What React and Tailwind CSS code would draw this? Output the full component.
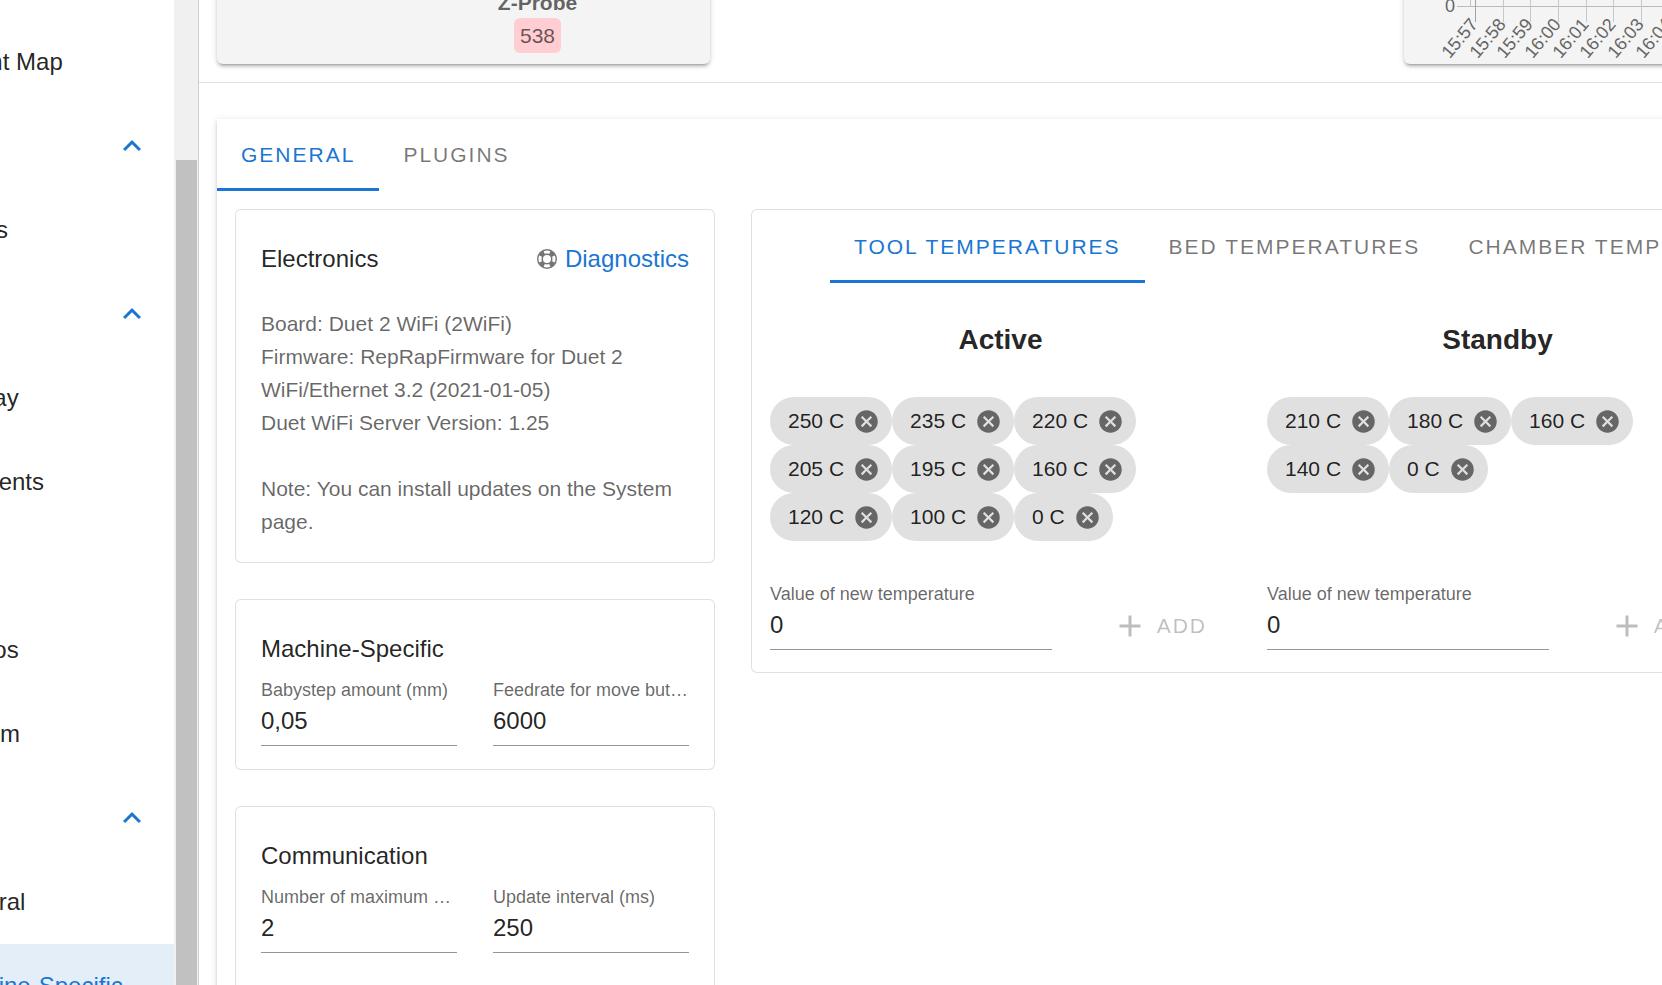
import React, { useState, useId } from 'react';

const navItems = [
  { title: 'Height Map' },
  { title: 'Current Job', group: true },
  { title: 'Status' },
  { title: 'File Management', group: true },
  { title: 'Display' },
  { title: 'Filaments' },
  { title: 'Jobs' },
  { title: 'Macros' },
  { title: 'System' },
  { title: 'Settings', group: true },
  { title: 'General' },
  { title: 'Machine-Specific', active: true },
];

const timeLabels = ['15:57', '15:58', '15:59', '16:00', '16:01', '16:02', '16:03', '16:04', '16:05', '16:06'];

const ChevronUpIcon = () => (
  <svg viewBox="0 0 24 24" className="size-9" fill="currentColor" aria-hidden="true">
    <path d="M7.41,15.41L12,10.83L16.59,15.41L18,14L12,8L6,14L7.41,15.41Z" />
  </svg>
);

const LifebuoyIcon = () => (
  <svg viewBox="0 0 24 24" className="size-6 text-black/54" fill="currentColor" aria-hidden="true">
    <path d="M19.79,15.41C20.74,13.24 20.74,10.75 19.79,8.59L17.05,9.83C17.65,11.21 17.65,12.78 17.06,14.17L19.79,15.41M15.42,4.21C13.25,3.26 10.76,3.26 8.59,4.21L9.83,6.94C11.22,6.35 12.79,6.35 14.18,6.95L15.42,4.21M4.21,8.58C3.26,10.76 3.26,13.24 4.21,15.42L6.95,14.17C6.35,12.79 6.35,11.21 6.95,9.82L4.21,8.58M8.59,19.79C10.76,20.74 13.25,20.74 15.42,19.78L14.18,17.05C12.8,17.65 11.22,17.65 9.84,17.06L8.59,19.79M12,2A10,10 0 0,1 22,12A10,10 0 0,1 12,22A10,10 0 0,1 2,12A10,10 0 0,1 12,2M12,8A4,4 0 0,0 8,12A4,4 0 0,0 12,16A4,4 0 0,0 16,12A4,4 0 0,0 12,8Z" />
  </svg>
);

const CloseCircleIcon = () => (
  <svg viewBox="0 0 24 24" className="size-[27px] text-[#666]" fill="currentColor" aria-hidden="true">
    <path d="M12,2C17.53,2 22,6.47 22,12C22,17.53 17.53,22 12,22C6.47,22 2,17.53 2,12C2,6.47 6.47,2 12,2M15.59,7L12,10.59L8.41,7L7,8.41L10.59,12L7,15.59L8.41,17L12,13.41L15.59,17L17,15.59L13.41,12L17,8.41L15.59,7Z" />
  </svg>
);

const PlusIcon = () => (
  <svg viewBox="0 0 24 24" className="size-9" fill="currentColor" aria-hidden="true">
    <path d="M19,13H13V19H11V13H5V11H11V5H13V11H19V13Z" />
  </svg>
);

const Sidebar = () => (
  <aside className="flex shrink-0 border-r border-[#d0d0d0]">
    <nav className="w-[174px] overflow-hidden pt-5">
      {navItems.map((item) =>
        item.group ? (
          <button
            key={item.title}
            type="button"
            aria-label={item.title}
            aria-expanded="true"
            className="flex h-[84px] w-full items-center justify-end pr-6 text-[#1976d2]"
          >
            <ChevronUpIcon />
          </button>
        ) : (
          <a
            key={item.title}
            href="#"
            className={`flex h-[84px] items-center text-2xl ${item.active ? 'bg-[#e3eef9] text-[#1976d2]' : 'text-black/87'}`}
          >
            <span className="-ml-[60px] whitespace-nowrap">{item.title}</span>
          </a>
        )
      )}
    </nav>
    {/* Scrollbar */}
    <div className="w-6 bg-[#f0f0f0] pt-40 pr-px pl-0.5">
      <div className="h-full bg-[#c1c1c1]"></div>
    </div>
  </aside>
);

const TemperatureChart = () => (
  <svg className="h-[77px] w-full" role="img" aria-label="Temperature chart">
    <rect x="53" y="19" width="308" height="1" fill="#bbb" />
    <rect x="66" y="0" width="1" height="20" fill="#c4c4c4" />
    {timeLabels.map((label, i) => {
      const x = 72 + Math.round((i * 83) / 3);
      return (
        <g key={label}>
          <rect x={x - 1} y="0" width="1" height="35" fill={i === 0 ? '#a2a2a2' : '#c8c8c8'} />
          <text
            x="0"
            y="6"
            fontSize="18"
            fill="#666"
            textAnchor="end"
            transform={`translate(${x - 2} 34) rotate(-50)`}
          >
            {label}
          </text>
        </g>
      );
    })}
    <text x="51" y="25" fontSize="18" fill="#666" textAnchor="end">0</text>
  </svg>
);

const Tab = ({ label, active, onClick }) => (
  <button
    type="button"
    role="tab"
    aria-selected={active}
    onClick={onClick}
    className={`h-full border-b-3 px-6 pt-[3px] text-[21px] tracking-[2px] whitespace-nowrap uppercase ${
      active ? 'border-[#1976d2] text-[#1976d2]' : 'border-transparent text-black/54'
    }`}
  >
    {label}
  </button>
);

const Field = ({ label, value, onChange }) => {
  const id = useId();
  return (
    <div className="min-w-0 flex-1">
      <label htmlFor={id} className="block truncate text-lg leading-6 text-black/60">
        {label}
      </label>
      <input
        id={id}
        type="text"
        value={value}
        onChange={(e) => onChange(e.target.value)}
        className="block h-11 w-full border-b border-black/42 pb-[5px] text-2xl text-black/87 outline-none"
      />
    </div>
  );
};

const SettingsCard = ({ title, children }) => (
  <section className="rounded-md border border-black/12 bg-white px-[25px] pt-[25px] pb-[23px]">
    <h2 className="mb-[5px] text-2xl leading-12 text-black/87">{title}</h2>
    <div className="flex gap-9">{children}</div>
  </section>
);

const TemperatureList = ({ title, initial }) => {
  const [temps, setTemps] = useState(initial);
  const [value, setValue] = useState('0');
  const newTemp = parseFloat(value);
  const canAdd = !isNaN(newTemp) && !temps.includes(newTemp);

  const add = () => setTemps([...temps, newTemp].sort((a, b) => b - a));
  const remove = (temp) => setTemps(temps.filter((t) => t !== temp));

  return (
    <div className="flex flex-col px-[18px] pt-[37px] pb-[22px]">
      <h2 className="mb-[37px] text-center text-[28px] leading-10 font-bold text-black/87">{title}</h2>
      <ul className="mb-[41px] flex flex-wrap">
        {temps.map((temp) => (
          <li
            key={temp}
            className="flex h-12 items-center gap-[9px] rounded-full bg-[#e0e0e0] pr-3 pl-[18px] text-[21px] text-black/87"
          >
            {temp} C
            <button type="button" aria-label={`Remove ${temp} C`} onClick={() => remove(temp)}>
              <CloseCircleIcon />
            </button>
          </li>
        ))}
      </ul>
      <div className="mt-auto flex items-end gap-9">
        <Field label="Value of new temperature" value={value} onChange={setValue} />
        <button
          type="button"
          disabled={!canAdd}
          onClick={add}
          className="flex h-12 items-center gap-[9px] px-6 text-[21px] tracking-[2px] text-[#1976d2] uppercase disabled:text-black/26"
        >
          <PlusIcon />
          Add
        </button>
      </div>
    </div>
  );
};

const App = () => {
  const [tab, setTab] = useState('General');
  const [tempTab, setTempTab] = useState('Tool Temperatures');
  const [settings, setSettings] = useState({
    babystep: '0,05',
    feedrate: '6000',
    retries: '2',
    interval: '250',
  });

  const update = (key) => (value) => setSettings({ ...settings, [key]: value });

  return (
    <div className="flex h-screen overflow-hidden bg-white font-['Liberation_Sans',Arial,sans-serif]">
      <Sidebar />

      <main className="min-w-[1584px] flex-1">
        {/* Status panels */}
        <div className="-mt-[13px] flex justify-between px-[18px] pb-[18px]">
          <section className="flex w-[493px] rounded-md bg-[#f4f4f4] pl-37 text-[21px] text-black/60 shadow-[0_4px_2px_-3px_rgba(0,0,0,0.2),0_3px_3px_rgba(0,0,0,0.14),0_1px_7px_rgba(0,0,0,0.12)]">
            <div className="flex flex-1 flex-col items-center pb-[11px]">
              <strong className="leading-[31px]">Z-Probe</strong>
              <span className="rounded-md bg-[#ffcdd2] px-1.5 leading-[35px]">538</span>
            </div>
          </section>
          <section className="w-[361px] overflow-hidden rounded-md bg-[#f4f4f4] shadow-[0_4px_2px_-3px_rgba(0,0,0,0.2),0_3px_3px_rgba(0,0,0,0.14),0_1px_7px_rgba(0,0,0,0.12)]">
            <TemperatureChart />
          </section>
        </div>

        <hr className="border-black/12" />

        {/* Settings */}
        <div className="mx-[18px] mt-9 bg-white shadow-[0_4px_2px_-3px_rgba(0,0,0,0.2),0_3px_3px_rgba(0,0,0,0.14),0_1px_7px_rgba(0,0,0,0.12)]">
          <div role="tablist" className="flex h-18">
            {['General', 'Plugins'].map((name) => (
              <Tab key={name} label={name} active={tab === name} onClick={() => setTab(name)} />
            ))}
          </div>

          <div className="grid grid-cols-3 items-start gap-9 p-[18px]">
            <div className="flex flex-col gap-9">
              <section className="rounded-md border border-black/12 bg-white px-[25px] pt-[25px] pb-6">
                <div className="mb-6 flex items-center justify-between text-2xl leading-12">
                  <h2 className="text-black/87">Electronics</h2>
                  <a href="#" className="flex items-center gap-1.5 text-[#1976d2]">
                    <LifebuoyIcon />
                    Diagnostics
                  </a>
                </div>
                <div className="text-[21px] leading-[33px] text-black/60">
                  <p>Board: Duet 2 WiFi (2WiFi)</p>
                  <p>Firmware: RepRapFirmware for Duet 2 WiFi/Ethernet 3.2 (2021-01-05)</p>
                  <p>Duet WiFi Server Version: 1.25</p>
                  <p className="mt-[33px]">Note: You can install updates on the System page.</p>
                </div>
              </section>

              <SettingsCard title="Machine-Specific">
                <Field label="Babystep amount (mm)" value={settings.babystep} onChange={update('babystep')} />
                <Field label="Feedrate for move buttons (mm/min)" value={settings.feedrate} onChange={update('feedrate')} />
              </SettingsCard>

              <SettingsCard title="Communication">
                <div className="flex min-w-0 flex-1 gap-9 pb-24">
                  <Field label="Number of maximum HTTP retries" value={settings.retries} onChange={update('retries')} />
                  <Field label="Update interval (ms)" value={settings.interval} onChange={update('interval')} />
                </div>
              </SettingsCard>
            </div>

            {/* Temperatures */}
            <section className="col-span-2 rounded-md border border-black/12 bg-white">
              <div role="tablist" className="flex h-[73px] overflow-hidden pl-[78px]">
                {['Tool Temperatures', 'Bed Temperatures', 'Chamber Temperatures'].map((name) => (
                  <Tab key={name} label={name} active={tempTab === name} onClick={() => setTempTab(name)} />
                ))}
              </div>
              <div className="grid grid-cols-2">
                <TemperatureList title="Active" initial={[250, 235, 220, 205, 195, 160, 120, 100, 0]} />
                <TemperatureList title="Standby" initial={[210, 180, 160, 140, 0]} />
              </div>
            </section>
          </div>
        </div>
      </main>
    </div>
  );
};

export default App;
